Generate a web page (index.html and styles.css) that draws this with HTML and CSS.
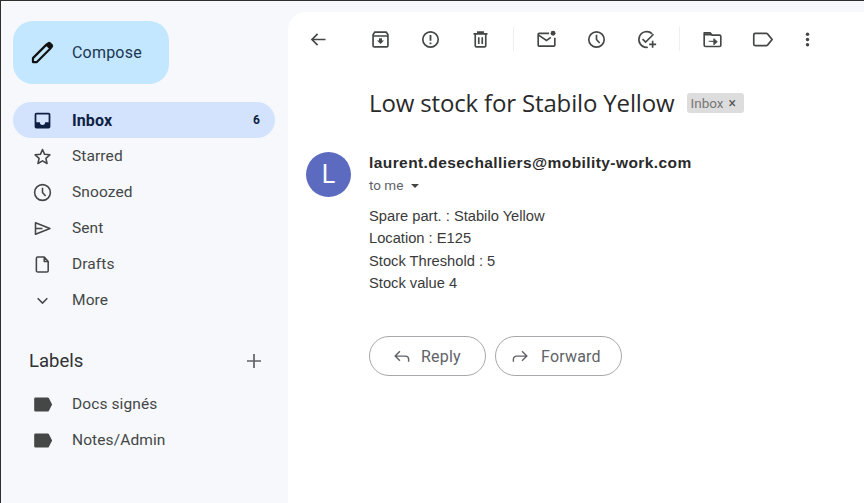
FILE: index.html
```html
<!DOCTYPE html>
<html lang="en">
<head>
<meta charset="utf-8">
<title>Low stock for Stabilo Yellow</title>
<link rel="stylesheet" href="styles.css">
</head>
<body>
<div class="app">
  <aside class="sidebar">
    <button class="compose">
      <svg class="compose-icon" viewBox="0 0 24 24"><path d="M3.500 20.500v-3.500L15.500 5l3.500 3.500L7 20.500z" fill="none" stroke="#111" stroke-width="1.900" stroke-linejoin="round"/><path d="M15 4.500l4.500 4.500 1.500-1.600a2 2 0 0 0 0-2.600L19.200 3a2 2 0 0 0-2.600 0z" fill="#111"/></svg>
      <span>Compose</span>
    </button>
    <nav class="nav">
      <a class="nav-item active">
        <svg class="icon" viewBox="0 0 24 24"><path d="M5 3h14a2 2 0 0 1 2 2v14a2 2 0 0 1-2 2H5a2 2 0 0 1-2-2V5a2 2 0 0 1 2-2zm0 11h4a3 3 0 0 0 6 0h4V5H5z" fill="#0e1f44" fill-rule="evenodd"/></svg>
        <span class="nav-label">Inbox</span><span class="count">6</span>
      </a>
      <a class="nav-item">
        <svg class="icon" viewBox="0 0 24 24"><path d="M12 4l2.400 5.500 6 .6-4.500 4 1.300 5.900L12 17l-5.200 3 1.300-5.900-4.500-4 6-.6z" fill="none" stroke="#444746" stroke-width="1.800" stroke-linejoin="round"/></svg>
        <span class="nav-label">Starred</span>
      </a>
      <a class="nav-item">
        <svg class="icon" viewBox="0 0 24 24"><circle cx="12" cy="12" r="9" fill="none" stroke="#444746" stroke-width="1.800"/><path d="M12 6.500V12l3.600 4" fill="none" stroke="#444746" stroke-width="1.800"/></svg>
        <span class="nav-label">Snoozed</span>
      </a>
      <a class="nav-item">
        <svg class="icon" viewBox="0 0 24 24"><path d="M4 5.500L20.500 12 4 18.500zM4 12h8" fill="none" stroke="#444746" stroke-width="1.800" stroke-linejoin="round"/></svg>
        <span class="nav-label">Sent</span>
      </a>
      <a class="nav-item">
        <svg class="icon" viewBox="0 0 24 24"><path d="M6.500 3.500H14l4.500 5V19a1.500 1.500 0 0 1-1.500 1.500H6.500A1.500 1.500 0 0 1 5 19V5a1.500 1.500 0 0 1 1.500-1.500zM14 3.500v5h4.500" fill="none" stroke="#444746" stroke-width="1.800" stroke-linejoin="round"/></svg>
        <span class="nav-label">Drafts</span>
      </a>
      <a class="nav-item">
        <svg class="icon" viewBox="0 0 24 24"><path d="M6.500 9.500L12 15l5.500-5.500" fill="none" stroke="#444746" stroke-width="1.700"/></svg>
        <span class="nav-label">More</span>
      </a>
    </nav>
    <div class="labels-head">
      <span>Labels</span>
      <svg class="plus" viewBox="0 0 24 24"><path d="M12 5v14M5 12h14" fill="none" stroke="#5f6368" stroke-width="1.700"/></svg>
    </div>
    <div class="nav">
      <a class="nav-item">
        <svg class="icon" viewBox="0 0 24 24"><path d="M4 4h14a1.500 1.500 0 0 1 1.200.6L23 12l-3.800 7.400a1.500 1.500 0 0 1-1.200.6H4a1.500 1.500 0 0 1-1.500-1.500v-13A1.500 1.500 0 0 1 4 4z" fill="#444746"/></svg>
        <span class="nav-label">Docs signés</span>
      </a>
      <a class="nav-item">
        <svg class="icon" viewBox="0 0 24 24"><path d="M4 4h14a1.500 1.500 0 0 1 1.200.6L23 12l-3.800 7.400a1.500 1.500 0 0 1-1.200.6H4a1.500 1.500 0 0 1-1.500-1.500v-13A1.500 1.500 0 0 1 4 4z" fill="#444746"/></svg>
        <span class="nav-label">Notes/Admin</span>
      </a>
    </div>
  </aside>

  <main class="main">
    <div class="toolbar">
      <span class="tool back"><svg class="icon" viewBox="0 0 24 24"><path d="M20 12H5M11 5.500L4.500 12l6.500 6.500" fill="none" stroke="#444746" stroke-width="1.900"/></svg></span>
      <div class="group">
        <span class="tool"><svg class="icon" viewBox="0 0 24 24"><path d="M5.500 3.500h13l2 3V19a1.500 1.500 0 0 1-1.500 1.500H5A1.500 1.500 0 0 1 3.500 19V6.500zM3.500 8h17" fill="none" stroke="#444746" stroke-width="1.900" stroke-linejoin="round"/><path d="M10.300 10.500h3.400v2.500H16l-4 4-4-4h2.300z" fill="#444746"/></svg></span>
        <span class="tool"><svg class="icon" viewBox="0 0 24 24"><circle cx="12" cy="12" r="8.800" fill="none" stroke="#444746" stroke-width="1.900"/><path d="M12 6.800v6.700M12 15.300v2" fill="none" stroke="#444746" stroke-width="2.100"/></svg></span>
        <span class="tool"><svg class="icon" viewBox="0 0 24 24"><path d="M6 6.500V19a1.500 1.500 0 0 0 1.500 1.500h9A1.500 1.500 0 0 0 18 19V6.500M4 5.500h16M9 5V3.500h6V5M10 9.500v7.500M14 9.500v7.500" fill="none" stroke="#444746" stroke-width="1.900"/></svg></span>
      </div>
      <i class="sep"></i>
      <div class="group">
        <span class="tool"><svg class="icon" viewBox="0 0 24 24"><path d="M15 5H3.500a1 1 0 0 0-1 1v12.500a1 1 0 0 0 1 1h17a1 1 0 0 0 1-1V10" fill="none" stroke="#444746" stroke-width="1.900"/><path d="M3 7l9 6 5-3.400" fill="none" stroke="#444746" stroke-width="1.900"/><circle cx="19.500" cy="4.800" r="2.800" fill="#444746"/></svg></span>
        <span class="tool"><svg class="icon" viewBox="0 0 24 24"><circle cx="12" cy="12" r="8.800" fill="none" stroke="#444746" stroke-width="1.900"/><path d="M12 6.500V12l3.600 4" fill="none" stroke="#444746" stroke-width="1.900"/></svg></span>
        <span class="tool"><svg class="icon" viewBox="0 0 24 24"><path d="M18.500 5.500A9 9 0 1 0 12 21a9 9 0 0 0 1.500-.1" fill="none" stroke="#444746" stroke-width="1.900"/><path d="M7.500 11.500l3.500 3.500 9-9M19 13.500v8M15 17.500h8" fill="none" stroke="#444746" stroke-width="1.900"/></svg></span>
      </div>
      <i class="sep"></i>
      <div class="group">
        <span class="tool"><svg class="icon" viewBox="0 0 24 24"><path d="M2.500 4.500h7l2 2.500H20a1.500 1.500 0 0 1 1.500 1.500v10A1.500 1.500 0 0 1 20 20H4a1.500 1.500 0 0 1-1.500-1.500z" fill="none" stroke="#444746" stroke-width="1.900" stroke-linejoin="round"/><path d="M7.500 14h6v-3l4 3.500-4 3.500v-3" fill="#444746" stroke="#444746" stroke-width="1"/><path d="M3 5h6.500l2 2.500H3z" fill="#444746"/></svg></span>
        <span class="tool"><svg class="icon" viewBox="0 0 24 24"><path d="M3.500 5h13a1.500 1.500 0 0 1 1.200.6L23 12l-5.300 6.400a1.500 1.500 0 0 1-1.200.6h-13A1.500 1.500 0 0 1 2 17.500v-11A1.500 1.500 0 0 1 3.500 5z" fill="none" stroke="#444746" stroke-width="1.900"/></svg></span>
        <span class="tool more"><svg class="icon" viewBox="0 0 24 24"><circle cx="12" cy="6" r="2" fill="#444746"/><circle cx="12" cy="12" r="2" fill="#444746"/><circle cx="12" cy="18" r="2" fill="#444746"/></svg></span>
      </div>
    </div>

    <div class="subject">
      <h1>Low stock for Stabilo Yellow</h1>
      <span class="tag">Inbox <b>×</b></span>
    </div>

    <div class="message">
      <div class="avatar">L</div>
      <div class="content">
        <div class="sender">laurent.desechalliers@mobility-work.com</div>
        <div class="to">to me <i class="caret"></i></div>
        <div class="body">
          <p>Spare part. : Stabilo Yellow</p>
          <p>Location : E125</p>
          <p>Stock Threshold : 5</p>
          <p>Stock value 4</p>
        </div>
        <div class="actions">
          <button class="action reply"><svg viewBox="0 0 24 24"><path d="M21 18.500v-3a4 4 0 0 0-4-4H4M10 5.500l-6 6 6 6" fill="none" stroke="#5f6368" stroke-width="1.800"/></svg>Reply</button>
          <button class="action forward"><svg viewBox="0 0 24 24"><path d="M3 18.500v-3a4 4 0 0 1 4-4h13M14 5.500l6 6-6 6" fill="none" stroke="#5f6368" stroke-width="1.800"/></svg>Forward</button>
        </div>
      </div>
    </div>
  </main>
</div>
</body>
</html>
```
FILE: styles.css
```css
* { box-sizing: border-box; }
html, body { margin: 0; height: 100%; }
body {
  background: #f6f8fc;
  border-top: 1px solid #2e2e2e;
  border-left: 1px solid #2e2e2e;
  overflow: hidden;
  font-family: Roboto, "Liberation Sans", sans-serif;
}
.app { display: flex; height: 502px; }
.sidebar { width: 287px; flex: none; padding: 20px 0 0 12px; }
.compose {
  display: flex; align-items: center;
  width: 156px; height: 63px;
  padding: 0 0 0 16px;
  background: #c2e7ff;
  border: 0; border-radius: 20px;
  font: 400 16px Roboto, sans-serif;
  color: #1c3553;
  letter-spacing: .2px;
}
.compose-icon { width: 27px; height: 27px; margin-right: 16px; }
.nav { display: flex; flex-direction: column; width: 262px; }
.sidebar > .nav:first-of-type { margin-top: 18px; }
.nav-item {
  display: flex; align-items: center;
  height: 36px;
  padding: 0 16px 0 17px;
  border-radius: 18px;
  font-size: 15.500px;
  color: #444746;
  letter-spacing: .1px;
}
.nav-item.active { background: #d3e3fd; color: #0e1f44; font-weight: 700; font-size: 16px; }
.icon { width: 24px; height: 24px; flex: none; display: block; }
.nav-item .icon { width: 21px; height: 21px; margin: 0 20px 0 2px; }
.nav-item .nav-label { margin-left: -1px; }
.nav-label { flex: 1; }
.count { font-size: 12px; font-weight: 700; margin-right: -1px; }
.labels-head {
  display: flex; align-items: center; justify-content: space-between;
  width: 262px; height: 24px;
  margin-top: 31px; margin-bottom: 13px;
  padding: 0 9px 0 16px;
  font-size: 18.500px;
  color: #2f3133;
}
.plus { width: 24px; height: 24px; }

.main {
  flex: 1;
  margin-top: 11px;
  background: #fff;
  border-radius: 18px 0 0 0;
  padding-left: 18px;
}
.toolbar { display: flex; align-items: center; height: 54px; }
.tool { width: 49.700px; display: flex; justify-content: center; }
.tool .icon { width: 21px; height: 21px; }
.back { width: 24px; margin-right: 26px; }
.group { display: flex; }
.sep { width: 1px; height: 24px; background: #eceef0; margin: 0 8px; }
.tool.more { width: 40px; }

.subject { display: flex; align-items: center; margin: 20px 0 0 63px; height: 32px; }
.subject h1 {
  margin: 0;
  font: 400 24px "Open Sans", Roboto, sans-serif;
  letter-spacing: -.15px;
  color: #2a2a2a;
  white-space: nowrap;
}
.tag {
  margin-left: 12px;
  margin-top: 2px;
  display: inline-flex; align-items: center;
  height: 20px; width: 57px; padding: 0 0 0 4px;
  background: #dddddd; border-radius: 3px;
  font-size: 13.500px; color: #777;
}
.tag b { margin-left: 5px; font-weight: 400; color: #555; font-size: 14px; }

.message { display: flex; margin-top: 32px; }
.avatar {
  width: 45px; height: 45px; flex: none;
  margin-top: 2px;
  border-radius: 50%;
  background: #5c6bc0;
  color: #fff;
  display: flex; align-items: center; justify-content: center;
  font: 400 25px Roboto, sans-serif;
}
.content { margin-left: 18px; padding-top: 3px; }
.sender {
  font: 700 15.500px "Liberation Sans", sans-serif;
  color: #2a2a2a;
  letter-spacing: .42px;
  line-height: 20px;
}
.to { font-size: 13.500px; color: #5f6368; line-height: 20px; margin-top: 2px; display: flex; align-items: center; }
.caret {
  width: 0; height: 0; margin-left: 8px; margin-top: 1px;
  border: 4px solid transparent; border-top: 4px solid #444; border-bottom: 0;
  border-left-width: 4.500px; border-right-width: 4.500px;
}
.body { margin-top: 10px; font: 400 14.700px "Liberation Sans", sans-serif; color: #3a3a3a; }
.body p { margin: 0; height: 22.300px; line-height: 22.300px; }
.actions { display: flex; gap: 9px; margin-top: 42px; }
.action {
  display: flex; align-items: center;
  height: 40px; padding: 0;
  background: #fff;
  border: 1px solid #a6a8ab;
  border-radius: 20px;
  font: 400 16px Roboto, sans-serif;
  color: #5f6368;
  letter-spacing: .2px;
}
.action svg { width: 19px; height: 19px; }
.reply { width: 117px; padding-left: 22px; }
.reply svg { margin-right: 10px; }
.forward { width: 127px; padding-left: 15px; }
.forward svg { margin-right: 11px; }
```
